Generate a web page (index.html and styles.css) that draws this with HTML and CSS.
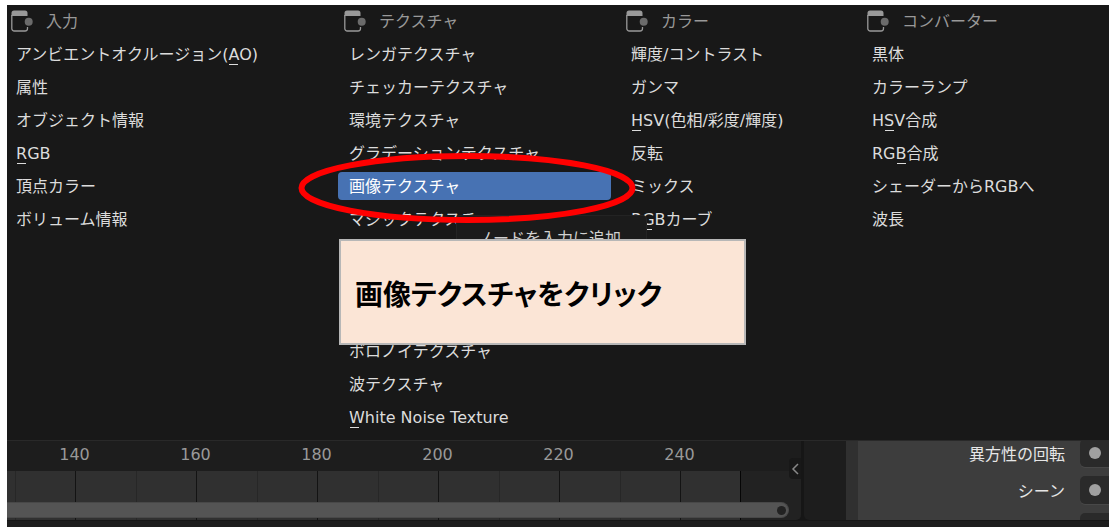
FILE: index.html
```html
<!DOCTYPE html>
<html lang="ja">
<head>
  <meta charset="UTF-8">
  <title>画像テクスチャをクリック</title>
  <link rel="stylesheet" href="styles.css">
</head>
<body>
  <svg class="symbols" aria-hidden="true">
    <symbol id="node" viewBox="0 0 24 24">
      <path d="M17.500 8V5a2.500 2.500 0 0 0-2.500-2.500h-11a2.500 2.500 0 0 0-2.500 2.500V8z" fill="#999"/>
      <path d="M1.800 7v13.500a2.500 2.500 0 0 0 2.500 2.500h10.700a2.500 2.500 0 0 0 2.500-2.500v-1.500" fill="none" stroke="#999" stroke-width="1.300"/>
      <circle cx="18.700" cy="13.700" r="4" fill="#6b6b6b"/>
    </symbol>
  </svg>

  <div class="app">
    <div class="menu">
      <section>
        <h2><svg class="icon"><use href="#node"/></svg>入力</h2>
        <ul>
          <li><button>アンビエントオクルージョン(<u>A</u>O)</button></li>
          <li><button>属性</button></li>
          <li><button>オブジェクト情報</button></li>
          <li><button><u>R</u>GB</button></li>
          <li><button>頂点カラー</button></li>
          <li><button>ボリューム情報</button></li>
        </ul>
      </section>
      <section>
        <h2><svg class="icon"><use href="#node"/></svg>テクスチャ</h2>
        <ul>
          <li><button>レンガテクスチャ</button></li>
          <li><button>チェッカーテクスチャ</button></li>
          <li><button>環境テクスチャ</button></li>
          <li><button>グラデーションテクスチャ</button></li>
          <li class="current">
            <button>画像テクスチャ</button>
            <div class="tooltip">ノードを入力に追加</div>
            <svg class="ring" width="338" height="72" viewBox="0 0 338 72">
              <ellipse cx="169" cy="36" rx="165.500" ry="32" fill="none" stroke="#f00" stroke-width="6"/>
            </svg>
            <div class="callout">画像テクスチャをクリック</div>
          </li>
          <li><button>マジックテクスチャ</button></li>
          <li class="after-callout"><button>ボロノイテクスチャ</button></li>
          <li><button>波テクスチャ</button></li>
          <li><button><u>W</u>hite Noise Texture</button></li>
        </ul>
      </section>
      <section>
        <h2><svg class="icon"><use href="#node"/></svg>カラー</h2>
        <ul>
          <li><button>輝度/コントラスト</button></li>
          <li><button>ガンマ</button></li>
          <li><button><u>H</u>SV(色相/彩度/輝度)</button></li>
          <li><button>反転</button></li>
          <li><button>ミックス</button></li>
          <li><button>R<u>G</u>Bカーブ</button></li>
        </ul>
      </section>
      <section>
        <h2><svg class="icon"><use href="#node"/></svg>コンバーター</h2>
        <ul>
          <li><button>黒体</button></li>
          <li><button>カラーランプ</button></li>
          <li><button>H<u>S</u>V合成</button></li>
          <li><button>RG<u>B</u>合成</button></li>
          <li><button>シェーダーからRGBへ</button></li>
          <li><button>波長</button></li>
        </ul>
      </section>
    </div>

    <div class="editors">
      <div class="timeline">
        <div class="ruler">
          <span>140</span>
          <span>160</span>
          <span>180</span>
          <span>200</span>
          <span>220</span>
          <span>240</span>
        </div>
        <div class="track">
          <div class="frames"></div>
          <div class="scrollbar"><i></i></div>
        </div>
        <button class="expand" aria-label="サイドバー">
          <svg width="8" height="14" viewBox="0 0 8 14"><path d="M7 2L2 7l5 5" fill="none" stroke="#888" stroke-width="1.500"/></svg>
        </button>
      </div>
      <div class="gutter"></div>
      <div class="properties">
        <div class="row">
          <label for="rotation">異方性の回転</label>
          <button class="socket" id="rotation"></button>
        </div>
        <div class="row">
          <label for="sheen">シーン</label>
          <button class="socket" id="sheen"></button>
        </div>
        <div class="row">
          <button class="socket" aria-label="ソケット"></button>
        </div>
      </div>
    </div>
    <div class="status"></div>
  </div>
</body>
</html>
```

FILE: styles.css
```css
body {
  margin: 0;
  padding: 5px 4px 4px 7px;
  background: #fff;
  font-family: "DejaVu Sans", "Noto Sans CJK JP", sans-serif;
  font-size: 16px;
}
.symbols {
  display: none;
}
.app {
  background: #161616;
  overflow: hidden;
}
button {
  border: 0;
  padding: 0;
  font: inherit;
}

/* add menu */
.menu {
  position: relative;
  z-index: 1;
  display: grid;
  grid-template-columns: 324fr 273fr 232fr 248fr;
  column-gap: 9px;
  margin-left: -2px;
  padding: 1px 0 9px;
  background: #181818;
  border-bottom: 1px solid #292929;
}
.menu h2 {
  display: flex;
  align-items: center;
  gap: 12px;
  height: 28px;
  margin: 0 0 6px;
  padding-left: 5px;
  color: #999;
  font-size: 16px;
  font-weight: normal;
}
.icon {
  width: 24px;
  height: 24px;
}
.menu ul {
  display: flex;
  flex-direction: column;
  gap: 5px;
  margin: 0;
  padding: 0;
  list-style: none;
}
.menu li button {
  display: block;
  width: 100%;
  height: 28px;
  padding: 0 11px;
  border-radius: 4px;
  background: none;
  color: #dcdcdc;
  line-height: 30px;
  text-align: left;
  white-space: nowrap;
}
.menu u {
  padding-bottom: 1px;
  background: linear-gradient(currentColor, currentColor) 1px 100% / 9px 1px no-repeat;
  text-decoration: none;
}
.menu .current {
  position: relative;
  z-index: 1;
}
.menu .current button {
  background: #4772b3;
  color: #fff;
}
.menu .after-callout {
  margin-top: 99px;
}

.tooltip {
  position: absolute;
  top: 43px;
  left: 118px;
  box-sizing: border-box;
  height: 50px;
  padding: 0 25px 0 20px;
  border: 1px solid #232323;
  border-radius: 4px;
  background: #1b1b1b;
  color: #d0d0d0;
  line-height: 46px;
  white-space: nowrap;
}
.ring {
  position: absolute;
  top: -20px;
  left: -40px;
}
.callout {
  position: absolute;
  top: 67px;
  left: 1px;
  box-sizing: border-box;
  width: 407px;
  height: 106px;
  padding-left: 14px;
  border: 2px solid #b7b7b7;
  background: #fbe5d6;
  color: #000;
  font-family: "Noto Sans CJK JP", sans-serif;
  font-size: 28px;
  font-weight: bold;
  font-feature-settings: "palt";
  line-height: 104px;
  white-space: nowrap;
}

/* timeline and properties below the menu */
.editors {
  display: flex;
  height: 79px;
}
.timeline {
  position: relative;
  flex: 794;
  background: #1d1d1d;
  border-radius: 0 0 5px 0;
  overflow: hidden;
}
.ruler {
  display: flex;
  height: 30px;
  padding-left: 7px;
  color: #999;
  line-height: 28px;
}
.ruler span {
  width: 121px;
  text-align: center;
}
.track {
  display: grid;
  height: 49px;
  background: #222;
}
.frames,
.scrollbar {
  grid-area: 1 / 1;
}
.frames {
  margin-right: 60px;
  border-right: 1px solid #050505;
  background:
    repeating-linear-gradient(90deg, transparent 0 68px, #131313 68px 69px, transparent 69px 121px),
    repeating-linear-gradient(90deg, transparent 0 8px, #272727 8px 9px, transparent 9px 121px),
    #303030;
}
.scrollbar {
  display: flex;
  align-items: center;
  justify-content: flex-end;
  align-self: end;
  box-sizing: border-box;
  height: 16px;
  margin: 0 12px 2px 0;
  padding-right: 2px;
  border: 1px solid #484848;
  border-left: 0;
  border-radius: 0 8px 8px 0;
  background: #545454;
}
.scrollbar i {
  width: 9px;
  height: 9px;
  border-radius: 50%;
  background: #222;
}
.expand {
  position: absolute;
  top: 17px;
  right: 0;
  display: flex;
  align-items: center;
  justify-content: center;
  width: 12px;
  height: 21px;
  border-radius: 4px 0 0 4px;
  background: #181818;
}
.gutter {
  flex: 42;
  margin-left: 3px;
  background: #1d1d1d;
  border-radius: 0 0 0 5px;
}
.properties {
  display: flex;
  flex: 251;
  flex-direction: column;
  gap: 9px;
  box-sizing: border-box;
  margin-top: -2px;
  border-left: 12px solid #303030;
  background: #3d3d3d;
  overflow: hidden;
}
.row {
  display: flex;
  flex: none;
  align-items: center;
  justify-content: flex-end;
  gap: 15px;
  height: 28px;
  color: #e6e6e6;
}
.socket {
  display: flex;
  align-items: center;
  justify-content: center;
  width: 29px;
  height: 28px;
  border-radius: 5px 0 0 5px;
  background: #2a2a2a;
  box-shadow: 0 1px #484848;
}
.socket::before {
  content: "";
  width: 12px;
  height: 12px;
  border-radius: 50%;
  background: #a0a0a0;
}
.status {
  height: 6px;
  border-top: 1px solid #161616;
  background: #1d1d1d;
}
```
